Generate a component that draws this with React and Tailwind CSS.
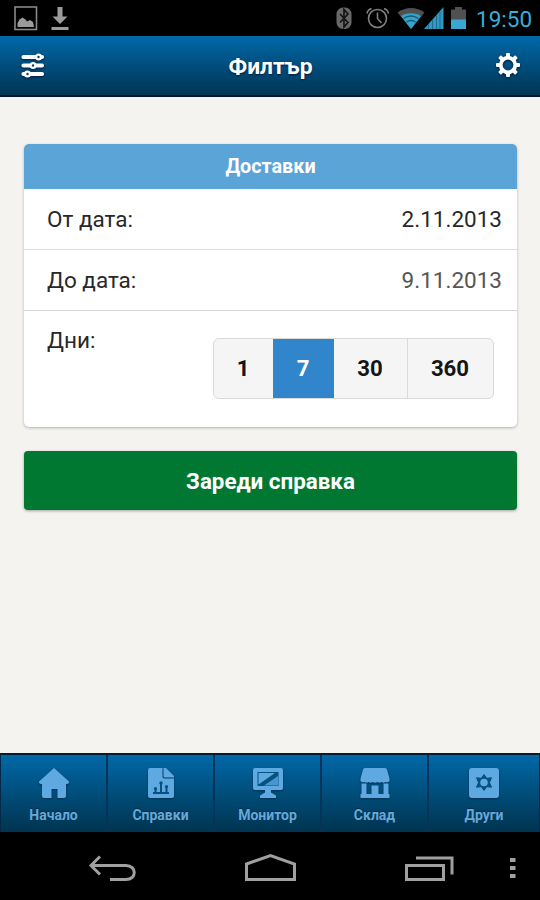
import React, { useState } from "react";

const DAYS = [
  { value: "1", width: "w-[59px]" },
  { value: "7", width: "w-[61px]" },
  { value: "30", width: "w-[74px]" },
  { value: "360", width: "w-[85px]" },
];

function StatusBar() {
  return (
    <div className="flex h-9 shrink-0 items-center justify-between bg-black">
      <svg width="80" height="36" viewBox="0 0 80 36" fill="#9b9b9b">
        <rect x="15" y="7" width="21.5" height="22.5" fill="none" stroke="#888" strokeWidth="1.6" />
        <path d="M17.500 27v-4l2-3.500 3-2 3 2 1.500 2 3-1.500 3 2 1 5z" />
        <path d="M57.500 7h5v9.500h5L60 24l-7.500-7.500h5zM51.500 27h17v3h-17z" />
      </svg>
      <div className="flex items-center">
        <svg width="140" height="36" viewBox="332 0 140 36">
          <rect x="336.500" y="7.500" width="15" height="21.500" rx="6.500" fill="#686868" />
          <path d="M340 14l8 8.500-4 4.500V9.500l4 4.500-8 8.500" fill="none" stroke="#151515" strokeWidth="1.700" />
          <g fill="none" stroke="#808080" strokeWidth="1.600">
            <circle cx="377.500" cy="18.500" r="9" />
            <path d="M377.500 12.500v6l4 4.500M367 13.500c.5-2.500 2-4.200 4.500-5M388.500 13.500c-.5-2.500-2-4.200-4.500-5" />
          </g>
          <path d="M397.500 12.500c8-6 19-6 27 0L411 29z" fill="#505050" />
          <path d="M401 16c6-3.800 14-3.800 20 0L411 29z" fill="#36a3cb" />
          <path d="M403.500 18.500c4.500-3.200 10.500-3.200 15 0M406.500 22c3-2 6-2 9 0" fill="none" stroke="#155b78" strokeWidth="1.500" />
          <path d="M424 29l19.500-22v22z" fill="#3198c1" />
          <path d="M428.500 24v5M432.500 20v9M436.500 15.500V29M440 12v17" stroke="#1b6e91" strokeWidth="1" />
          <path d="M451 9.500h4v-2.500h7v2.500h4V20h-15z" fill="#505050" />
          <path d="M451 19.500h15V29h-15z" fill="#3ba6d0" />
        </svg>
        <span className="w-[68px] pl-1 pt-px font-[Roboto,sans-serif] text-[22.5px] leading-9 text-[#35afdc]">19:50</span>
      </div>
    </div>
  );
}

function SlidersIcon() {
  return (
    <svg width="26" height="28" viewBox="0 0 26 28" className="drop-shadow-[0_1px_1px_#001b42]">
      <path d="M3.500 5h18.500M3.500 13.500h18.500M3.500 22h18.500" stroke="#fff" strokeWidth="4.200" strokeLinecap="round" />
      <g fill="#193b62" stroke="#fff" strokeWidth="2.400">
        <circle cx="18.500" cy="5" r="2.400" />
        <circle cx="13" cy="13.500" r="2.400" />
        <circle cx="7.500" cy="22" r="2.400" />
      </g>
    </svg>
  );
}

function GearIcon() {
  return (
    <svg width="26" height="28" viewBox="-13 -13 26 28" className="drop-shadow-[0_1px_1px_#001b42]">
      <g fill="#fff">
        <rect x="-2" y="-12" width="4" height="5" rx="1" />
        <rect x="-2" y="-12" width="4" height="5" rx="1" transform="rotate(45)" />
        <rect x="-2" y="-12" width="4" height="5" rx="1" transform="rotate(90)" />
        <rect x="-2" y="-12" width="4" height="5" rx="1" transform="rotate(135)" />
        <rect x="-2" y="-12" width="4" height="5" rx="1" transform="rotate(180)" />
        <rect x="-2" y="-12" width="4" height="5" rx="1" transform="rotate(225)" />
        <rect x="-2" y="-12" width="4" height="5" rx="1" transform="rotate(270)" />
        <rect x="-2" y="-12" width="4" height="5" rx="1" transform="rotate(315)" />
      </g>
      <circle r="7.300" fill="none" stroke="#fff" strokeWidth="3.700" />
    </svg>
  );
}

function HomeIcon() {
  return (
    <path d="M15 0l15 13.500q.3 2.500-2 2.500h-1v12q0 2-2 2h-6.500v-9h-6v9H5q-2 0-2-2V16H2Q-.3 16 0 13.500z" fill="#5ea9e2" />
  );
}

function ReportIcon() {
  return (
    <>
      <path d="M4 0h12.500v8.500q0 2 2 2H28V28q0 2-2 2H4q-2 0-2-2V2q0-2 2-2z" fill="#5ea9e2" />
      <path d="M17.500 0h2.500l8 8v1.500h-9q-1.500 0-1.500-1.500z" fill="#5ea9e2" />
      <path d="M9.500 20v5M15 15v10M20.500 19v6M7 25h16" stroke="#07517f" strokeWidth="2" />
      <g fill="#07517f">
        <circle cx="9.500" cy="20.500" r="1.600" />
        <circle cx="15" cy="15" r="1.700" />
        <circle cx="20.500" cy="18.500" r="1.600" />
      </g>
    </>
  );
}

function MonitorIcon() {
  return (
    <>
      <path d="M2 0h26q2 0 2 2v18q0 2-2 2H18v2.500l5 3V30H7v-2.500l5-3V22H2q-2 0-2-2V2q0-2 2-2z" fill="#5ea9e2" />
      <path d="M4.500 4h21v14h-21z" fill="#07517f" />
      <path d="M5.500 5H22L5.500 16.500z" fill="#5ea9e2" />
      <path d="M25 8v9.500H11z" fill="#4796d0" />
    </>
  );
}

function StoreIcon() {
  return (
    <g fill="#5ea9e2">
      <path d="M5 0h20q1.500 0 2 1.500l2.500 9V13q-1.500 2-4 1-2 1.500-4 0-2 1.500-4 0-2.500 1.500-5 0-2 1.500-4 0-2 1.500-4 0-2.500 1-4-1v-2.500l2.500-9Q3.500 0 5 0z" />
      <path d="M1.500 15.500h5V26h5v-8.500h7V26h5V15.500h5V26h1v4H.5v-4h1z" />
    </g>
  );
}

function OtherIcon() {
  return (
    <>
      <rect width="30" height="30" rx="3" fill="#5ea9e2" />
      <path
        d="M15 6.500l2.700 3.800 4.800-.5-2 4.700 2 4.700-4.800-.5-2.700 3.800-2.700-3.800-4.800.5 2-4.700-2-4.700 4.800.5z"
        fill="#07517f"
        stroke="#07517f"
        strokeWidth="1"
        strokeLinejoin="round"
      />
      <circle cx="15" cy="14.500" r="3.800" fill="#5ea9e2" />
    </>
  );
}

const TABS = [
  { label: "Начало", Icon: HomeIcon },
  { label: "Справки", Icon: ReportIcon },
  { label: "Монитор", Icon: MonitorIcon },
  { label: "Склад", Icon: StoreIcon },
  { label: "Други", Icon: OtherIcon },
];

function TabBar() {
  return (
    <nav className="flex h-[79px] shrink-0 border-x border-t-2 border-x-[#06294a] border-t-[#061a30] bg-gradient-to-b from-[#0069a8] to-[#003450]">
      {TABS.map(({ label, Icon }, index) => (
        <button
          key={label}
          className={`flex flex-col items-center pt-[13px] ${
            index === 4 ? "w-[110px]" : "w-[107px] border-r-2 border-[#06335a]"
          }`}
        >
          <svg width="30" height="30" viewBox="0 0 30 30" className="drop-shadow-[0_1px_1px_#003052]">
            <Icon />
          </svg>
          <span className="mt-[9px] text-sm leading-4 font-bold text-[#68a8d8] [text-shadow:0_-1px_1px_#002b4c]">
            {label}
          </span>
        </button>
      ))}
    </nav>
  );
}

function SystemNav() {
  return (
    <div className="h-[68px] shrink-0 bg-black">
      <svg width="540" height="68" viewBox="0 832 540 68" fill="none" stroke="#a0a0a0" strokeWidth="3">
        <path d="M100 856.500l-9 9 9 9M92 865.500h34c11 0 11 14 0 14h-16" />
        <path d="M246.500 864l24-8.500 24 8.500v15.500h-48z" />
        <path d="M406.500 865.500h37v14h-37zM416 858h36v16.500" />
        <path d="M510 858h5.500v4H510zM510 866h5.500v4H510zM510 874h5.500v4H510z" fill="#a0a0a0" stroke="none" />
      </svg>
    </div>
  );
}

export default function App() {
  const [days, setDays] = useState("7");

  return (
    <div className="flex h-[900px] w-[540px] flex-col overflow-hidden bg-[#f5f3ef] font-[Roboto,sans-serif]">
      <StatusBar />

      {/* Title bar */}
      <header className="flex h-[61px] shrink-0 items-center justify-between border-b-2 border-[#04132d] bg-gradient-to-b from-[#0069a9] to-[#003554] px-5">
        <button><SlidersIcon /></button>
        <h1 className="pt-[3px] text-[22.8px] font-bold text-white [text-shadow:0_1px_2px_#001c40]">Филтър</h1>
        <button className="-mr-px"><GearIcon /></button>
      </header>

      <main className="flex flex-1 flex-col gap-6 px-6 pt-[47px]">
        {/* Filter */}
        <section className="mr-[-1px] h-[283px] shrink-0 overflow-hidden rounded-[5px] bg-white shadow-[0_1px_3px_rgba(0,0,0,0.28)]">
          <h2 className="h-[45px] bg-[#5ba4d8] text-center text-[19.8px] leading-[46px] font-bold text-white">Доставки</h2>
          <div className="flex h-[61px] items-center justify-between border-b border-[#dfdfdf] pt-0.5 pr-[15px] pl-[23px] text-[22.5px] text-[#282828]">
            <span>От дата:</span>
            <span>2.11.2013</span>
          </div>
          <div className="flex h-[61px] items-center justify-between border-b border-[#d8d8d8] pt-0.5 pr-[15px] pl-[23px] text-[22.5px] text-[#282828]">
            <span>До дата:</span>
            <span className="text-[#555]">9.11.2013</span>
          </div>
          <div className="flex justify-between pr-[23px] pl-[23px] text-[22.5px] text-[#282828]">
            <span className="pt-[13px]">Дни:</span>
            <div className="mt-[27px] flex h-[61px] w-[281px] overflow-hidden rounded-md border border-[#dadada] bg-[#f5f5f5]">
              {DAYS.map((day) => (
                <button
                  key={day.value}
                  onClick={() => setDays(day.value)}
                  className={`${day.width} shrink-0 pr-px text-[22.2px] font-bold ${
                    days === day.value ? "bg-[#3185ca] text-white" : "text-[#151515]"
                  } ${day.value === "30" ? "border-r border-[#dadada]" : ""}`}
                >
                  {day.value}
                </button>
              ))}
            </div>
          </div>
        </section>

        <button className="mr-[-1px] h-[59px] shrink-0 rounded-[4px] bg-[#007832] pt-[3px] text-[22.4px] font-bold text-white shadow-[0_1px_3px_rgba(0,0,0,0.35)]">
          Зареди справка
        </button>
      </main>

      <TabBar />
      <SystemNav />
    </div>
  );
}
